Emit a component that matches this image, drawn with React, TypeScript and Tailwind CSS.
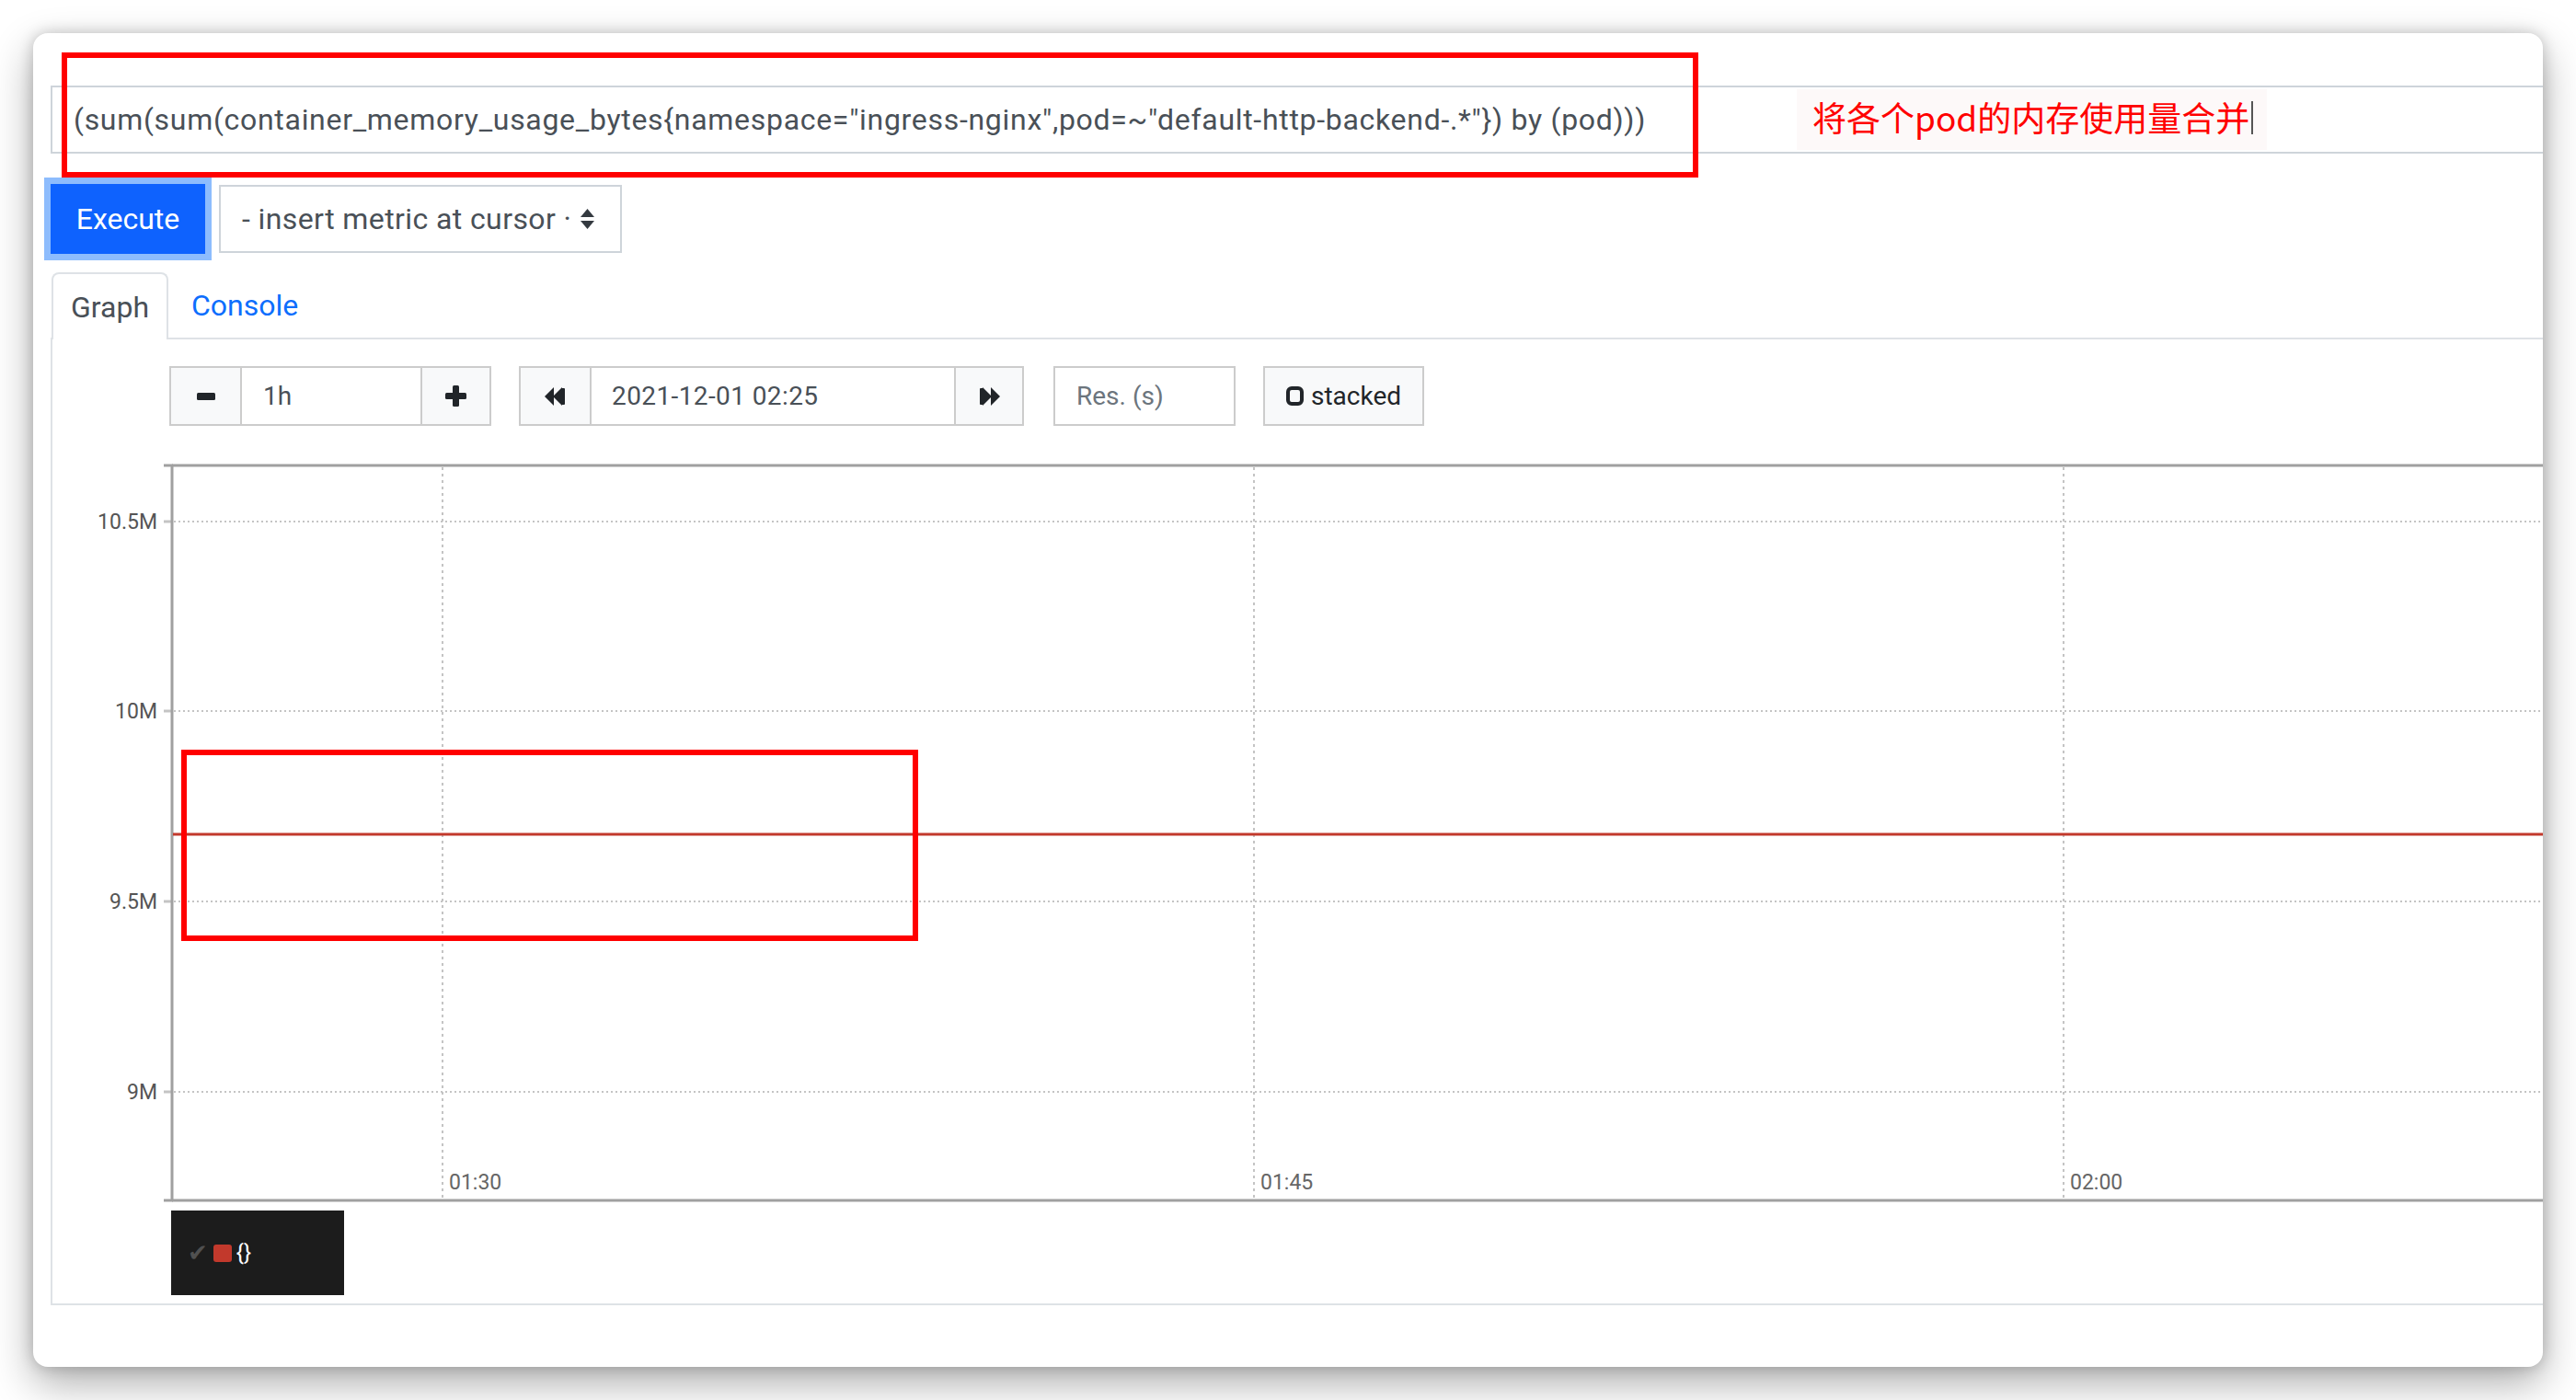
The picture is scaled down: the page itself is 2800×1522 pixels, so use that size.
import React from "react";

const QUERY =
  '(sum(sum(container_memory_usage_bytes{namespace="ingress-nginx",pod=~"default-http-backend-.*"}) by (pod)))';

function MinusIcon() {
  return (
    <svg width="20" height="20" viewBox="0 0 20 20">
      <rect x="0" y="6" width="20" height="8" rx="1.5" fill="#212529" />
    </svg>
  );
}
function PlusIcon() {
  return (
    <svg width="23" height="23" viewBox="0 0 23 23">
      <rect x="0" y="8" width="23" height="7" rx="1.5" fill="#212529" />
      <rect x="8" y="0" width="7" height="23" rx="1.5" fill="#212529" />
    </svg>
  );
}
function BackwardIcon() {
  return (
    <svg width="23" height="20" viewBox="0 0 23 20">
      <polygon points="0,10 10,0 10,20" fill="#212529" />
      <polygon points="9,10 19,0 19,20" fill="#212529" />
      <rect x="18" y="1" width="4" height="18" rx="1" fill="#212529" />
    </svg>
  );
}
function ForwardIcon() {
  return (
    <svg width="23" height="20" viewBox="0 0 23 20">
      <rect x="1" y="1" width="4" height="18" rx="1" fill="#212529" />
      <polygon points="4,0 14,10 4,20" fill="#212529" />
      <polygon points="13,0 23,10 13,20" fill="#212529" />
    </svg>
  );
}
function SquareIcon() {
  return (
    <svg width="19" height="21" viewBox="0 0 19 21">
      <rect x="2" y="2" width="15" height="17" rx="4" fill="none" stroke="#212529" strokeWidth="4" />
    </svg>
  );
}
function SortIcon() {
  return (
    <svg width="15" height="22" viewBox="0 0 15 22">
      <polygon points="7.5,0 15,9 0,9" fill="#343a40" />
      <polygon points="0,13 15,13 7.5,22" fill="#343a40" />
    </svg>
  );
}

function Chart() {
  const hGrid = [
    { y: 84, label: "10.5M" },
    { y: 290, label: "10M" },
    { y: 497, label: "9.5M" },
    { y: 704, label: "9M" },
  ];
  const vGrid = [
    { x: 424, label: "01:30" },
    { x: 1306, label: "01:45" },
    { x: 2186, label: "02:00" },
  ];
  const W = 2740;
  return (
    <svg width={W} height="828" className="block mt-[20px]">
      {hGrid.map((g) => (
        <line key={g.label} x1={132} x2={W} y1={g.y} y2={g.y} stroke="#c4c4c4" strokeWidth="2" strokeDasharray="2 3" />
      ))}
      {vGrid.map((g) => (
        <line key={g.label} x1={g.x} x2={g.x} y1={25} y2={822} stroke="#c4c4c4" strokeWidth="2" strokeDasharray="3 4" />
      ))}
      {hGrid.map((g) => (
        <line key={"t" + g.label} x1={121} x2={130} y1={g.y} y2={g.y} stroke="#c4c4c4" strokeWidth="3" />
      ))}
      <line x1={121} x2={131} y1={23} y2={23} stroke="#a0a0a0" strokeWidth="3" />
      <line x1={121} x2={131} y1={822} y2={822} stroke="#a0a0a0" strokeWidth="3" />
      <line x1={130} x2={W} y1={23} y2={23} stroke="#a0a0a0" strokeWidth="3" />
      <line x1={130} x2={130} y1={22} y2={823} stroke="#a0a0a0" strokeWidth="3" />
      <line x1={130} x2={W} y1={822} y2={822} stroke="#a0a0a0" strokeWidth="3" />
      {hGrid.map((g) => (
        <text
          key={"l" + g.label}
          x={114}
          y={g.y}
          textAnchor="end"
          dominantBaseline="central"
          fontSize="23"
          fill="#555"
          fontFamily="Roboto, 'Liberation Sans', sans-serif"
        >
          {g.label}
        </text>
      ))}
      {vGrid.map((g) => (
        <text
          key={"x" + g.label}
          x={g.x + 7}
          y={802}
          dominantBaseline="central"
          fontSize="23"
          fill="#666"
          fontFamily="Roboto, 'Liberation Sans', sans-serif"
        >
          {g.label}
        </text>
      ))}
      <line x1={131} x2={W} y1={424} y2={424} stroke="#c2392c" strokeWidth="3" />
    </svg>
  );
}

export default function App() {
  return (
    <div className="w-[2800px] h-[1522px] bg-white pt-[36px] pl-[36px] font-[family-name:Roboto,'Liberation_Sans',sans-serif]">
      <div className="relative w-[2728px] h-[1450px] bg-white rounded-[16px] overflow-hidden shadow-[0_18px_45px_rgba(0,0,0,0.32),0_0_16px_rgba(0,0,0,0.2)]">
        <div className="w-[2780px] pl-[19px] pt-[57px]">
          {/* query input */}
          <div className="h-[74px] border-2 border-[#ced4da] flex items-center pl-[23px] text-[32px] tracking-[0.7px] text-[#495057] whitespace-nowrap">
            {QUERY}
          </div>

          {/* execute row */}
          <div className="flex items-center mt-[33px] h-[76px]">
            <div className="h-[76px] w-[168px] bg-[#0e62fe] text-white text-[32px] flex items-center justify-center shadow-[0_0_0_7px_#8dbcfd]">
              Execute
            </div>
            <div className="ml-[15px] h-[74px] w-[438px] border-2 border-[#ced4da] flex items-center pl-[23px] text-[32px] tracking-[0.4px] text-[#495057] whitespace-nowrap">
              <span>- insert metric at cursor ·</span>
              <span className="ml-[10px] flex items-center">
                <SortIcon />
              </span>
            </div>
          </div>

          {/* tabs */}
          <div className="mt-[20px] flex h-[73px] border-b-2 border-[#dee2e6]">
            <div className="ml-[1px] -mb-[2px] h-[73px] px-[19px] border-2 border-b-0 border-[#dee2e6] rounded-t-[8px] bg-white flex items-center text-[32px] text-[#495057]">
              Graph
            </div>
            <div className="h-[71px] px-[25px] flex items-center text-[32px] text-[#0d6efd]">Console</div>
          </div>

          {/* tab content */}
          <div className="border-2 border-t-0 border-[#dee2e6] pt-[29px] pb-[9px]">
            <div className="ml-[127px] flex items-center h-[65px] text-[28px]">
              <div className="flex h-[65px] w-[350px] border-2 border-[#ccc]">
                <div className="w-[75px] bg-[#f8f9fa] flex items-center justify-center">
                  <MinusIcon />
                </div>
                <div className="w-[198px] border-x-2 border-[#ccc] bg-white flex items-center pl-[23px] text-[#495057]">1h</div>
                <div className="flex-1 bg-[#f8f9fa] flex items-center justify-center">
                  <PlusIcon />
                </div>
              </div>
              <div className="ml-[30px] flex h-[65px] w-[549px] border-2 border-[#ccc]">
                <div className="w-[75px] bg-[#f8f9fa] flex items-center justify-center">
                  <BackwardIcon />
                </div>
                <div className="w-[398px] border-x-2 border-[#ccc] bg-white flex items-center pl-[22px] tracking-[0.4px] text-[#495057]">
                  2021-12-01 02:25
                </div>
                <div className="flex-1 bg-[#f8f9fa] flex items-center justify-center">
                  <ForwardIcon />
                </div>
              </div>
              <div className="ml-[32px] h-[65px] w-[198px] border-2 border-[#ccc] bg-white flex items-center pl-[23px] text-[#6c757d]">
                Res. (s)
              </div>
              <div className="ml-[30px] h-[65px] w-[175px] border-2 border-[#ccc] bg-[#f8f9fa] flex items-center justify-center gap-[8px] text-[#212529]">
                <SquareIcon />
                <span>stacked</span>
              </div>
            </div>

            <Chart />

            <div className="ml-[129px] mt-[5px] w-[188px] h-[92px] bg-[#1c1c1c] flex items-center pl-[18px]">
              <span className="text-[26px] text-[#505050] leading-none font-[family-name:'DejaVu_Sans',sans-serif]">✔</span>
              <span className="ml-[6px] w-[20px] h-[19px] rounded-[3px] bg-[#c2392c]" />
              <span className="ml-[5px] text-[24px] text-white leading-none">{"{}"}</span>
            </div>
          </div>
        </div>

        {/* annotation: chinese text */}
        <div className="absolute left-[1917px] top-[61px] w-[511px] h-[66px] bg-[#fdf9f9] flex items-center pl-[17px] pb-[5px]">
          <span className="text-[37px] leading-none text-[#ff0000] whitespace-nowrap font-[family-name:'Noto_Sans_CJK_SC',sans-serif]">
            将各个pod的内存使用量合并
          </span>
          <span className="ml-[2px] w-[2px] h-[36px] bg-[#555]" />
        </div>

        {/* annotation boxes */}
        <div className="absolute left-[31px] top-[21px] w-[1779px] h-[136px] border-[6px] border-[#ff0000]" />
        <div className="absolute left-[161px] top-[779px] w-[801px] h-[208px] border-[6px] border-[#ff0000]" />
      </div>
    </div>
  );
}
